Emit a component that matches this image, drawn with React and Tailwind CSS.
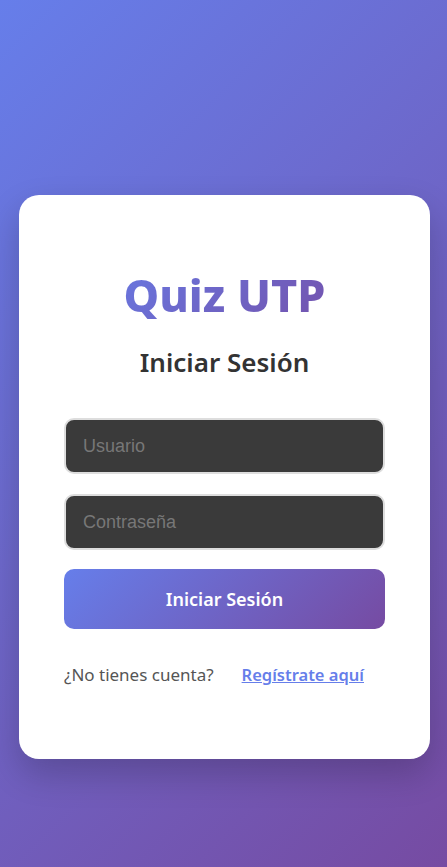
export default function App() {
  return (
    <div
      className="min-h-[867px] w-full bg-[linear-gradient(135deg,#667eea_0%,#764ba2_100%)] pt-[195px] pl-[19px] pr-[17px]"
      style={{ fontFamily: '"Noto Sans", sans-serif' }}
    >
      <div className="h-[564px] w-full rounded-[20px] bg-white px-[45px] pt-[72px] shadow-[0_15px_35px_rgba(0,0,0,0.2)]">
        <h1 className="bg-[linear-gradient(135deg,#667eea_0%,#764ba2_100%)] bg-clip-text text-center text-[45px] font-extrabold leading-[56px] text-transparent">
          Quiz UTP
        </h1>
        <h2 className="mt-[23px] text-center text-[26px] font-semibold leading-[32px] text-[#333]">Iniciar Sesión</h2>
        <form className="mt-[40px] flex flex-col" onSubmit={e => e.preventDefault()}>
          <input
            type="text"
            placeholder="Usuario"
            className="h-[56px] w-full rounded-[10px] border-2 border-[#ddd] bg-[#3a3a3a] px-[17px] text-[18px] text-white outline-none placeholder:text-[#777]"
            style={{ fontFamily: '"Liberation Sans", Arial, sans-serif' }}
          />
          <input
            type="password"
            placeholder="Contraseña"
            className="mt-[20px] h-[56px] w-full rounded-[10px] border-2 border-[#ddd] bg-[#3a3a3a] px-[17px] text-[18px] text-white outline-none placeholder:text-[#777]"
            style={{ fontFamily: '"Liberation Sans", Arial, sans-serif' }}
          />
          <button
            type="submit"
            className="mt-[19px] h-[60px] w-full rounded-[10px] bg-[linear-gradient(135deg,#667eea_0%,#764ba2_100%)] text-[18px] font-semibold text-white"
          >
            Iniciar Sesión
          </button>
        </form>
        <div className="mt-[34px] flex items-center text-[17px] leading-[24px]">
          <span className="text-[#555]">¿No tienes cuenta?</span>
          <a href="#" className="ml-[28px] text-[16.5px] font-semibold text-[#667eea] underline">
            Regístrate aquí
          </a>
        </div>
      </div>
    </div>
  )
}
